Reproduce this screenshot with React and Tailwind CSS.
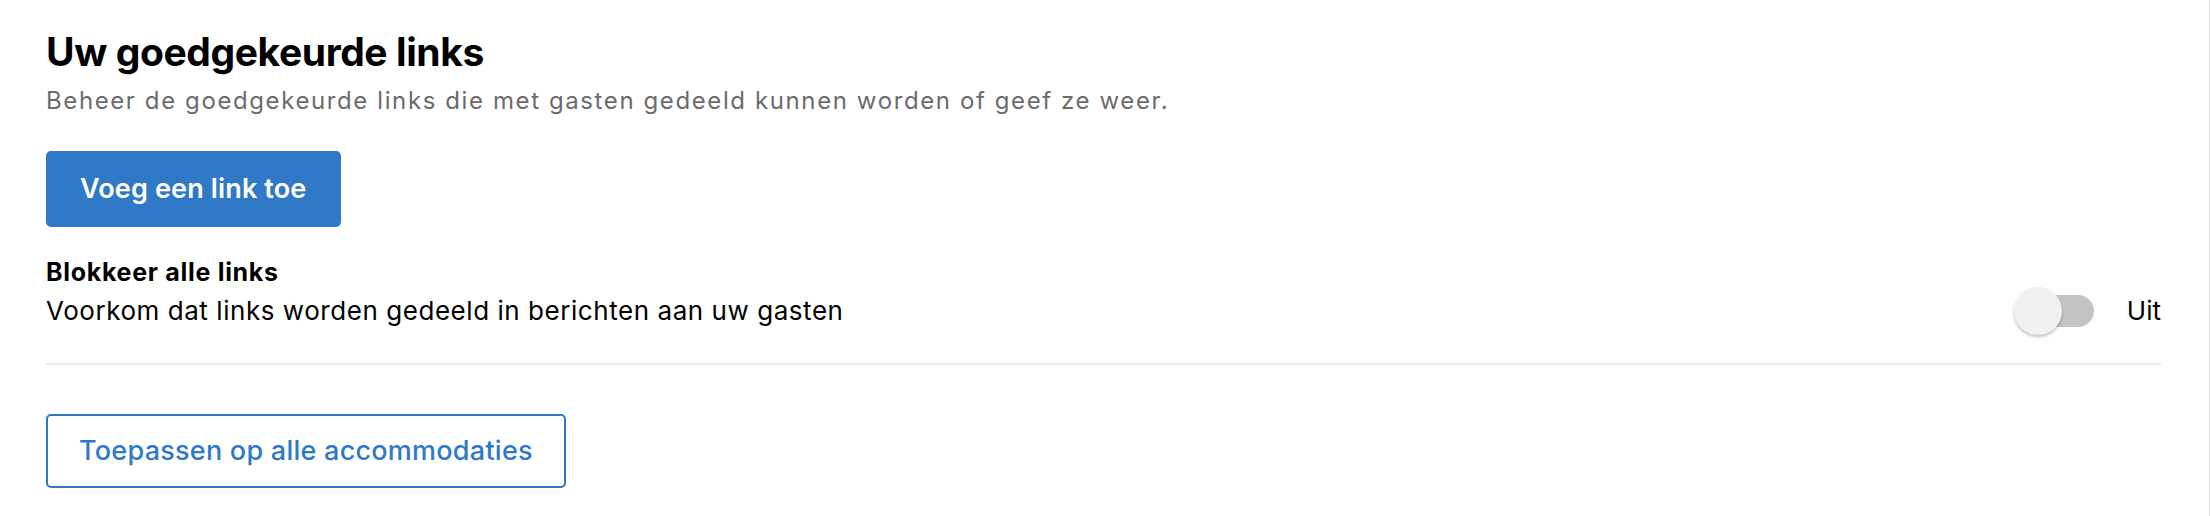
export default function App() {
  return (
    <div className="w-[2210px] h-[516px] bg-white border-r border-[#dcdcdc] box-border" style={{ fontFamily: 'Inter, "Noto Sans", sans-serif' }}>
      <div className="pl-[46px] pr-[48px] pt-[28px] flex flex-col items-start">
        <h1 className="text-[39px] leading-[48px] font-bold text-black tracking-[-0.4px]">Uw goedgekeurde links</h1>
        <p className="mt-[9px] text-[24px] leading-[32px] text-[#6b6b6b] tracking-[1.6px]">
          Beheer de goedgekeurde links die met gasten gedeeld kunnen worden of geef ze weer.
        </p>
        <button className="mt-[34px] h-[76px] px-[34px] rounded-[5px] bg-[#2f79c7] text-white text-[27px] font-semibold tracking-[0.15px]">
          Voeg een link toe
        </button>
        <div className="mt-[30px] text-[25px] leading-[30px] font-bold text-black tracking-[0.7px]">Blokkeer alle links</div>
        <div className="w-full h-[48px] flex items-center justify-between">
          <span className="text-[26px] leading-[36px] text-black tracking-[0.55px]">Voorkom dat links worden gedeeld in berichten aan uw gasten</span>
          <div className="flex items-center gap-[33px]">
            <div className="relative w-[80px] h-[48px] flex items-center">
              <div className="ml-[10px] w-[70px] h-[32px] rounded-full bg-[#c4c4c4]" />
              <div className="absolute left-0 top-0 w-[48px] h-[48px] rounded-full bg-[#f1f1f1] shadow-[0_2px_3px_rgba(0,0,0,0.25)]" />
            </div>
            <span className="text-[26px] leading-[36px] text-black">Uit</span>
          </div>
        </div>
        <div className="mt-[28px] w-full h-[2px] bg-[#ebebeb]" />
        <button className="mt-[49px] h-[74px] px-[31px] rounded-[5px] border-2 border-[#2f79c7] bg-white text-[#2f79c7] text-[27px] font-medium tracking-[0.25px]">
          Toepassen op alle accommodaties
        </button>
      </div>
    </div>
  );
}
